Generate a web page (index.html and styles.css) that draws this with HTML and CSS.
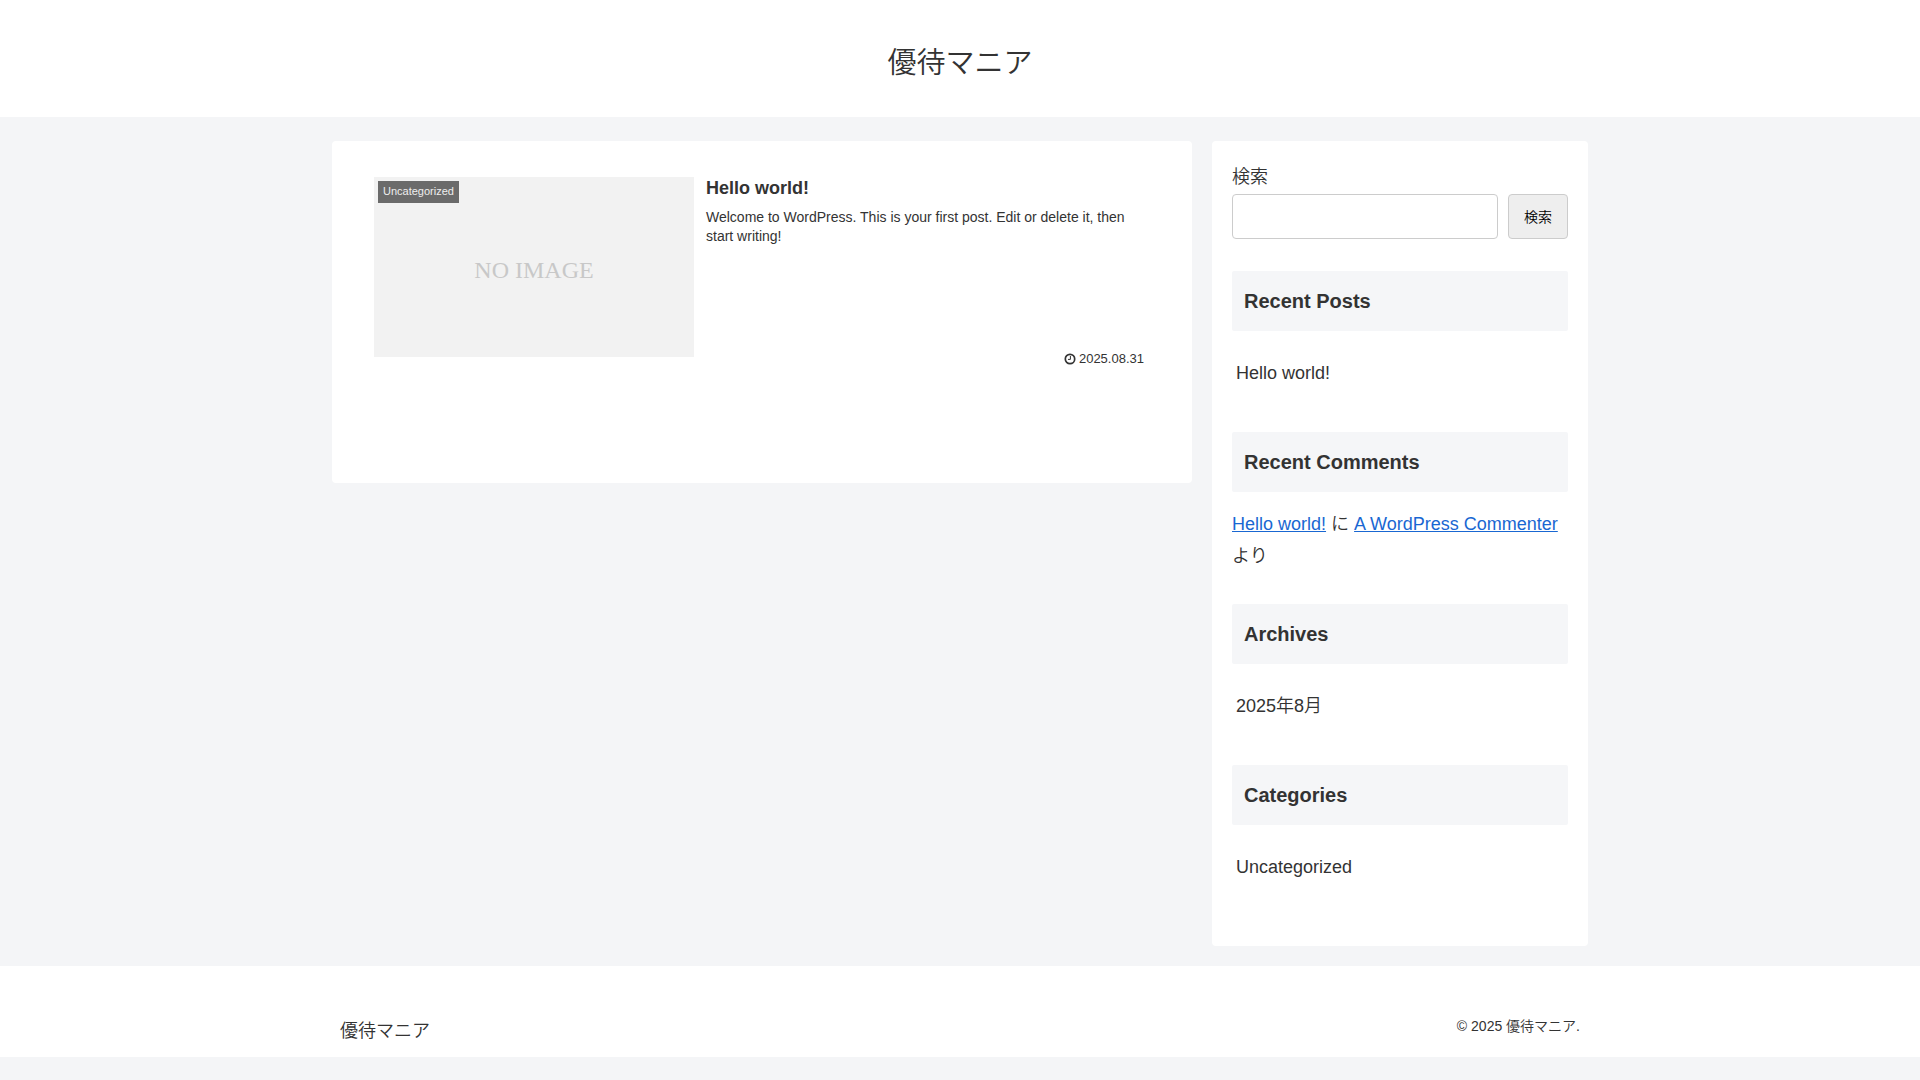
FILE: index.html
```html
<!DOCTYPE html>
<html lang="ja">
<head>
  <meta charset="UTF-8">
  <meta name="viewport" content="width=device-width, initial-scale=1.0">
  <title>優待マニア</title>
  <link rel="stylesheet" href="styles.css">
</head>
<body>
  <header class="header">
    <h1 class="logo"><a href="#">優待マニア</a></h1>
  </header>

  <div class="content wrap">
    <main class="main">
      <a href="#" class="entry-card">
        <div class="eyecatch">
          <span class="no-image">NO IMAGE</span>
          <span class="cat-label">Uncategorized</span>
        </div>
        <div class="entry-content">
          <h2 class="entry-title">Hello world!</h2>
          <p class="entry-snippet">Welcome to WordPress. This is your first post. Edit or delete it, then start writing!</p>
          <div class="entry-meta">
            <svg class="clock-icon" viewBox="0 0 12 12" aria-hidden="true">
              <circle cx="6" cy="6" r="4.7" fill="none" stroke="currentColor" stroke-width="1.7"/>
              <path d="M6.4 3v3.4H4" fill="none" stroke="currentColor" stroke-width="1"/>
            </svg>
            <time datetime="2025-08-31">2025.08.31</time>
          </div>
        </div>
      </a>
    </main>

    <aside class="sidebar">
      <form class="widget search">
        <label for="search-input">検索</label>
        <div class="search-box">
          <input type="search" id="search-input" class="search-input">
          <button type="button" class="search-btn">検索</button>
        </div>
      </form>

      <section class="widget">
        <h2 class="widget-title">Recent Posts</h2>
        <ul class="widget-list">
          <li><a href="#">Hello world!</a></li>
        </ul>
      </section>

      <section class="widget">
        <h2 class="widget-title">Recent Comments</h2>
        <p><a href="#">Hello world!</a> に <a href="#">A WordPress Commenter</a> より</p>
      </section>

      <section class="widget">
        <h2 class="widget-title">Archives</h2>
        <ul class="widget-list">
          <li><a href="#">2025年8月</a></li>
        </ul>
      </section>

      <section class="widget">
        <h2 class="widget-title">Categories</h2>
        <ul class="widget-list">
          <li><a href="#">Uncategorized</a></li>
        </ul>
      </section>
    </aside>
  </div>

  <footer class="footer">
    <div class="footer-inner wrap">
      <a href="#" class="footer-logo">優待マニア</a>
      <p class="copyright">© 2025 優待マニア.</p>
    </div>
  </footer>
</body>
</html>
```

FILE: styles.css
```css
* {
  box-sizing: border-box;
  margin: 0;
  padding: 0;
}

body {
  font-family: "Liberation Sans", Arial, "Noto Sans CJK JP", sans-serif;
  font-size: 18px;
  font-weight: 350;
  line-height: 1.8;
  color: #333;
  background-color: #f4f5f7;
}

a {
  color: #1967d2;
}

.wrap {
  width: 100%;
  max-width: 1256px;
  margin: 0 auto;
}

/* Header */
.header {
  padding: 37px 20px 28px;
  background-color: #fff;
  text-align: center;
}

.logo {
  font-size: 29px;
  font-weight: 350;
}

.logo a {
  color: #333;
  text-decoration: none;
}

/* Content */
.content {
  display: flex;
  align-items: flex-start;
  gap: 20px;
  padding: 24px 0 20px;
}

.main {
  flex: 1;
  min-width: 0;
  padding: 36px 42px 115px;
  background-color: #fff;
  border-radius: 4px;
}

.entry-card {
  display: flex;
  gap: 12px;
  color: #333;
  text-decoration: none;
}

.eyecatch {
  position: relative;
  display: flex;
  align-items: center;
  justify-content: center;
  width: 320px;
  height: 180px;
  background-color: #f2f2f2;
}

.no-image {
  padding-top: 6px;
  font-family: "Liberation Serif", "Times New Roman", serif;
  font-size: 24px;
  color: #c8c8c8;
}

.cat-label {
  position: absolute;
  top: 4px;
  left: 4px;
  padding: 1px 5px;
  font-size: 11px;
  color: #eee;
  background-color: #6b6b6b;
}

.entry-content {
  display: flex;
  flex-direction: column;
  flex: 1;
  min-height: 191px;
}

.entry-title {
  margin-bottom: 7px;
  font-size: 18px;
  line-height: 1.3;
}

.entry-snippet {
  font-size: 14px;
  line-height: 19px;
}

.entry-meta {
  display: flex;
  align-items: center;
  justify-content: flex-end;
  gap: 3px;
  margin-top: auto;
  padding-right: 6px;
  font-size: 13px;
  line-height: 18px;
}

.clock-icon {
  width: 12px;
  height: 12px;
}

/* Sidebar */
.sidebar {
  width: 376px;
  padding: 20px;
  background-color: #fff;
  border-radius: 4px;
}

.widget {
  margin-bottom: 32px;
}

.search label {
  display: block;
}

.search-box {
  display: flex;
  gap: 10px;
}

.search-input {
  flex: 1;
  min-width: 0;
  height: 45px;
  padding: 10px;
  font-size: 18px;
  border: 1px solid #ccc;
  border-radius: 4px;
}

.search-btn {
  width: 60px;
  font-family: inherit;
  font-size: 14px;
  font-weight: 350;
  color: #000;
  background-color: #eee;
  border: 1px solid #ccc;
  border-radius: 4px;
  cursor: pointer;
}

.widget-title {
  margin-bottom: 16px;
  padding: 12px;
  font-size: 20px;
  background-color: #f5f6f8;
  border-radius: 2px;
}

.widget-list {
  list-style: none;
}

.widget-list a {
  display: block;
  padding: 10px 4px;
  line-height: 33px;
  color: #333;
  text-decoration: none;
}

/* Footer */
.footer {
  background-color: #fff;
}

.footer-inner {
  display: flex;
  align-items: flex-end;
  justify-content: space-between;
  padding: 48px 8px 9px;
}

.footer-logo {
  color: #333;
  text-decoration: none;
}

.copyright {
  padding-bottom: 8px;
  font-size: 14px;
}
```
